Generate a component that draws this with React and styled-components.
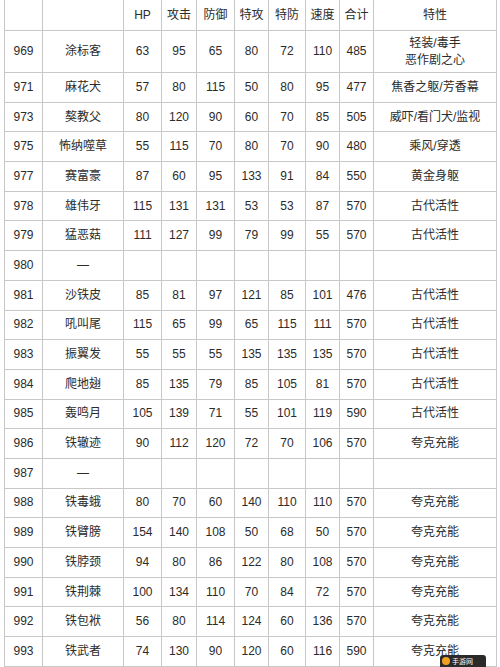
import React from 'react';
import styled, { createGlobalStyle } from 'styled-components';

const GlobalStyle = createGlobalStyle`
  html, body {
    margin: 0;
    padding: 0;
    background: #ffffff;
  }
  body {
    font-family: "Liberation Sans", "Noto Sans CJK SC", sans-serif;
    color: #2b2b2b;
  }
`;

const Page = styled.div`
  position: relative;
  width: 500px;
  height: 667px;
  overflow: hidden;
  background: #ffffff;
`;

const Table = styled.table`
  border-collapse: collapse;
  table-layout: fixed;
  width: 492px;
  margin: -1px 0 0 4px;
  font-size: 12px;
  font-family: "Liberation Sans", "Noto Sans CJK SC", sans-serif;
`;

const Cell = styled.td`
  border: 1px solid #c8c8c8;
  text-align: center;
  vertical-align: middle;
  padding: 0;
  line-height: 17px;
  color: #2b2b2b;
  white-space: nowrap;
`;

const HeadCell = styled(Cell).attrs({ as: 'th' })`
  font-weight: normal;
`;

const Row = styled.tr`
  height: ${(p) => p.$h}px;
`;

const Badge = styled.div`
  position: absolute;
  right: 14px;
  bottom: 0;
  width: 46px;
  height: 12px;
  background: #2a2a2a;
  border-radius: 3px 3px 0 0;
  display: flex;
  align-items: center;
  gap: 2px;
  padding-left: 2px;
  box-sizing: border-box;
  font-family: "Noto Sans CJK SC", sans-serif;
  font-size: 7px;
  color: #ffffff;
  line-height: 1;
`;

const Dot = styled.span`
  width: 8px;
  height: 8px;
  border-radius: 50%;
  background: #f0a020;
  flex: none;
`;

const widths = [38, 81, 38, 35, 38, 34, 37, 34, 34, 123];
const headers = ['', '', 'HP', '攻击', '防御', '特攻', '特防', '速度', '合计', '特性'];

const rows = [
  ['969', '涂标客', '63', '95', '65', '80', '72', '110', '485', ['轻装/毒手', '恶作剧之心']],
  ['971', '麻花犬', '57', '80', '115', '50', '80', '95', '477', '焦香之躯/芳香幕'],
  ['973', '獒教父', '80', '120', '90', '60', '70', '85', '505', '威吓/看门犬/监视'],
  ['975', '怖纳噬草', '55', '115', '70', '80', '70', '90', '480', '乘风/穿透'],
  ['977', '赛富豪', '87', '60', '95', '133', '91', '84', '550', '黄金身躯'],
  ['978', '雄伟牙', '115', '131', '131', '53', '53', '87', '570', '古代活性'],
  ['979', '猛恶菇', '111', '127', '99', '79', '99', '55', '570', '古代活性'],
  ['980', '—', '', '', '', '', '', '', '', ''],
  ['981', '沙铁皮', '85', '81', '97', '121', '85', '101', '476', '古代活性'],
  ['982', '吼叫尾', '115', '65', '99', '65', '115', '111', '570', '古代活性'],
  ['983', '振翼发', '55', '55', '55', '135', '135', '135', '570', '古代活性'],
  ['984', '爬地翅', '85', '135', '79', '85', '105', '81', '570', '古代活性'],
  ['985', '轰鸣月', '105', '139', '71', '55', '101', '119', '590', '古代活性'],
  ['986', '铁辙迹', '90', '112', '120', '72', '70', '106', '570', '夸克充能'],
  ['987', '—', '', '', '', '', '', '', '', ''],
  ['988', '铁毒蛾', '80', '70', '60', '140', '110', '110', '570', '夸克充能'],
  ['989', '铁臂膀', '154', '140', '108', '50', '68', '50', '570', '夸克充能'],
  ['990', '铁脖颈', '94', '80', '86', '122', '80', '108', '570', '夸克充能'],
  ['991', '铁荆棘', '100', '134', '110', '70', '84', '72', '570', '夸克充能'],
  ['992', '铁包袱', '56', '80', '114', '124', '60', '136', '570', '夸克充能'],
  ['993', '铁武者', '74', '130', '90', '120', '60', '116', '590', '夸克充能'],
];

const renderValue = (v) =>
  Array.isArray(v)
    ? v.map((line, i) => (
        <React.Fragment key={i}>
          {i > 0 && <br />}
          {line}
        </React.Fragment>
      ))
    : v;

export default function App() {
  return (
    <Page>
      <GlobalStyle />
      <Table>
        <colgroup>
          {widths.map((w, i) => (
            <col key={i} style={{ width: w }} />
          ))}
        </colgroup>
        <thead>
          <Row $h={31}>
            {headers.map((h, i) => (
              <HeadCell key={i}>{h}</HeadCell>
            ))}
          </Row>
        </thead>
        <tbody>
          {rows.map((r, i) => (
            <Row key={r[0]} $h={i === 0 ? 42 : 29.7}>
              {r.map((v, j) => (
                <Cell key={j}>{renderValue(v)}</Cell>
              ))}
            </Row>
          ))}
        </tbody>
      </Table>
      <Badge>
        <Dot />
        <span>手游网</span>
      </Badge>
    </Page>
  );
}
